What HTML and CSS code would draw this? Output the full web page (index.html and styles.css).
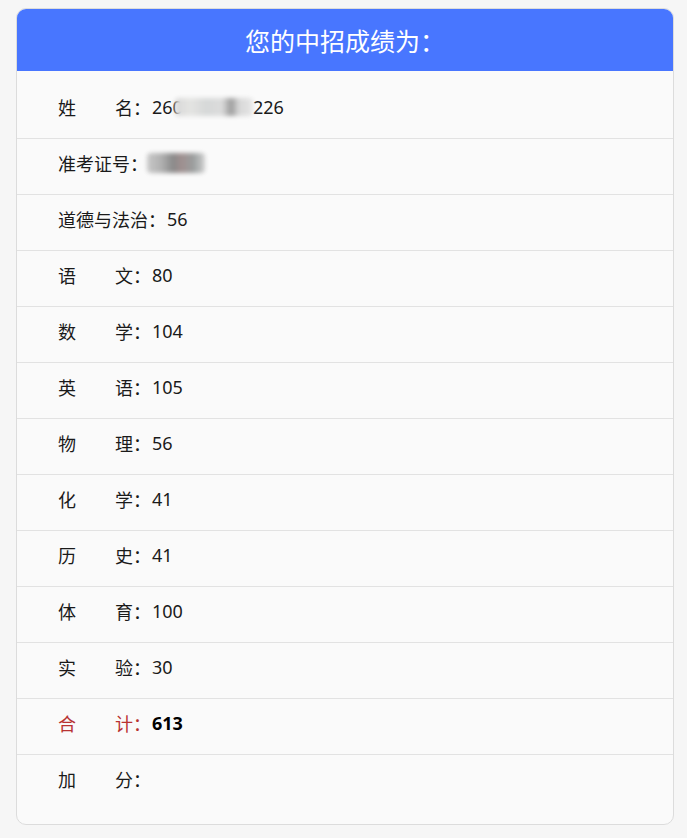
FILE: index.html
```html
<!DOCTYPE html>
<html lang="zh-CN">
<head>
<meta charset="utf-8">
<title>中招成绩</title>
<link rel="stylesheet" href="styles.css">
</head>
<body>
<div class="card">
  <div class="card-head">您的中招成绩为：</div>
  <ul class="list">
    <li class="row"><span class="lbl">姓名</span><span class="colon">：</span><span class="val">260<span class="mask mask-name"></span>226</span></li>
    <li class="row"><span class="lbl-free">准考证号</span><span class="colon">：</span><span class="val"><span class="mask mask-id"></span></span></li>
    <li class="row"><span class="lbl-free">道德与法治</span><span class="colon">：</span><span class="val">56</span></li>
    <li class="row"><span class="lbl">语文</span><span class="colon">：</span><span class="val">80</span></li>
    <li class="row"><span class="lbl">数学</span><span class="colon">：</span><span class="val">104</span></li>
    <li class="row"><span class="lbl">英语</span><span class="colon">：</span><span class="val">105</span></li>
    <li class="row"><span class="lbl">物理</span><span class="colon">：</span><span class="val">56</span></li>
    <li class="row"><span class="lbl">化学</span><span class="colon">：</span><span class="val">41</span></li>
    <li class="row"><span class="lbl">历史</span><span class="colon">：</span><span class="val">41</span></li>
    <li class="row"><span class="lbl">体育</span><span class="colon">：</span><span class="val">100</span></li>
    <li class="row"><span class="lbl">实验</span><span class="colon">：</span><span class="val">30</span></li>
    <li class="row total"><span class="lbl">合计</span><span class="colon">：</span><span class="val">613</span></li>
    <li class="row"><span class="lbl">加分</span><span class="colon">：</span><span class="val"></span></li>
  </ul>
</div>
</body>
</html>
```
FILE: styles.css
```css
html, body {
  margin: 0;
  padding: 0;
  background: #f6f6f6;
}
body {
  padding: 8px 13px 0 16px;
  font-family: "Noto Sans", "Noto Sans CJK SC", sans-serif;
  color: #1a1a1a;
}
.card {
  background: #fafafa;
  border: 1px solid #dcdcdc;
  border-radius: 10px;
  overflow: hidden;
}
.card-head {
  background: #4876ff;
  color: #fff;
  height: 63px;
  margin: -1px -1px 0 -1px;
  display: flex;
  align-items: center;
  justify-content: center;
  font-size: 25px;
  font-family: "Noto Sans CJK SC", sans-serif;
}
.list {
  list-style: none;
  margin: 0;
  padding: 12px 0 14px 0;
}
.row {
  display: flex;
  align-items: center;
  padding: 12px 41px 19px;
  line-height: 24px;
  font-size: 18px;
  border-bottom: 1px solid #e2e2e2;
}
.row:last-child {
  border-bottom: none;
}
.lbl {
  display: inline-block;
  width: 75px;
  text-align: justify;
  text-align-last: justify;
  font-family: "Noto Sans CJK SC", sans-serif;
}
.lbl-free {
  font-family: "Noto Sans CJK SC", sans-serif;
}
.colon {
  font-family: "Noto Sans CJK SC", sans-serif;
  width: 18px;
  display: inline-block;
}
.val {
  display: inline-flex;
  align-items: center;
  padding-left: 1px;
}
.total .lbl, .total .colon {
  color: #b83232;
}
.total .val {
  font-weight: bold;
  color: #000;
}
.mask {
  display: inline-block;
  height: 18px;
  filter: blur(2px);
  border-radius: 4px;
}
.mask-name {
  width: 78px;
  margin: 0 0 0 -8px;
  background: linear-gradient(90deg, #d8d8d8 0%, #e4e4e2 20%, #d6d8d8 40%, #dcdcdc 60%, #9c9c9c 72%, #d8d8d8 82%, #e6e6e6 100%);
}
.mask-id {
  width: 58px;
  height: 20px;
  margin-left: -2px;
  background: linear-gradient(90deg, #c8c8c8 0%, #b0b0b0 25%, #8a8a8a 45%, #a09090 60%, #9a9e9e 80%, #d0d0d0 100%);
}
```
